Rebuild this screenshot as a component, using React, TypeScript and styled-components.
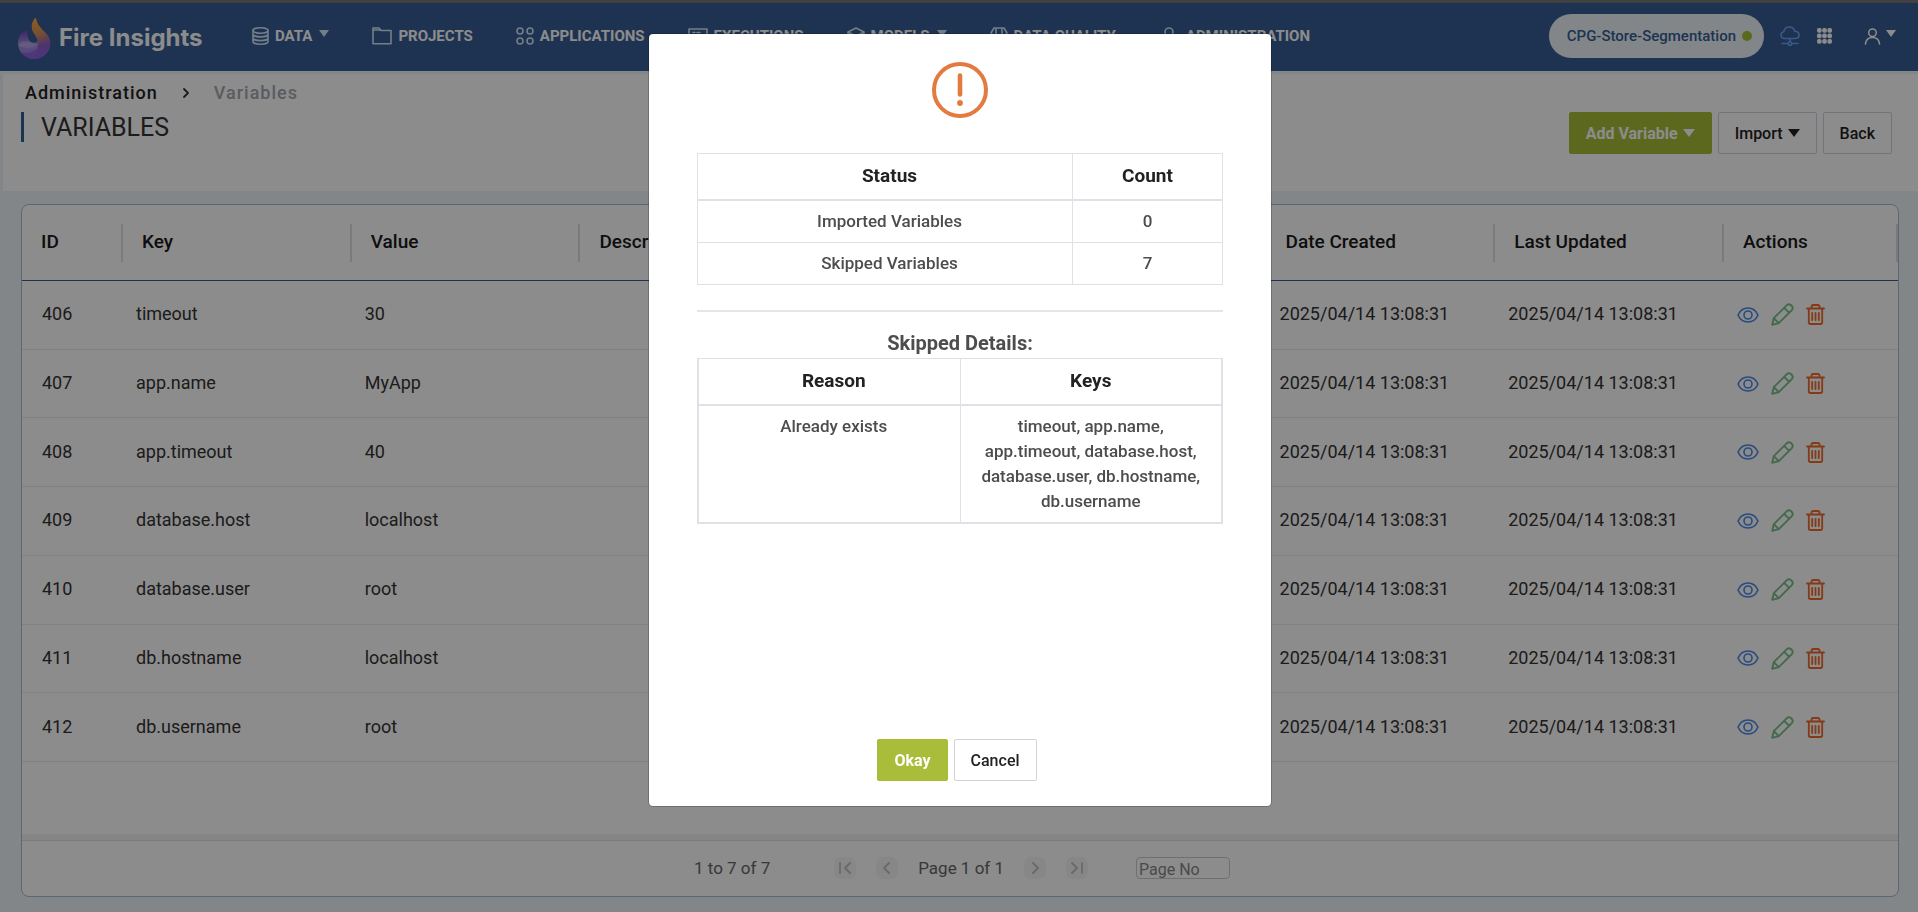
import React from 'react';
import styled, { createGlobalStyle, css } from 'styled-components';

const color = {
  brand: '#385d95',
  green: '#a9bd3a',
  page: '#eef4f8',
  tableLine: '#dee2e6',
};

const GlobalStyle = createGlobalStyle`
  *, *::before, *::after { box-sizing: border-box; }
  body {
    margin: 0;
    font-family: Roboto, "Liberation Sans", sans-serif;
    font-size: 16px;
    color: #333;
    background: ${color.page};
  }
  button, input { font-family: inherit; }
`;

/* ---------- page frame ---------- */

const Page = styled.div`
  display: flex;
  flex-direction: column;
  min-height: 100vh;
`;

const TopBar = styled.header`
  display: flex;
  align-items: center;
  height: 71px;
  padding: 0 22px 0 18px;
  border-top: 3px solid #777;
  background: ${color.brand};
`;

const Brand = styled.a`
  display: flex;
  align-items: center;
  gap: 8px;
  width: 234px;
  padding-top: 2px;
  color: #fff;
  font: 700 24px/32px Inter, sans-serif;
  text-decoration: none;
  white-space: nowrap;
`;

const Nav = styled.nav`
  display: flex;
  flex: 1;
  gap: 43px;
  padding-bottom: 2px;
`;

const NavLink = styled.a`
  display: flex;
  align-items: center;
  gap: 6px;
  color: #fff;
  font-size: 15px;
  font-weight: 700;
  line-height: 24px;
  text-decoration: none;
  white-space: nowrap;
  svg:first-child { color: #cfe6f7; }
`;

const Tools = styled.div`
  display: flex;
  align-items: center;
  padding-bottom: 2px;
`;

const ProjectPill = styled.button`
  display: flex;
  align-items: center;
  gap: 6px;
  height: 44px;
  margin-right: 16px;
  padding: 0 12px 0 18px;
  border: 0;
  border-radius: 22px;
  background: ${color.page};
  color: ${color.brand};
  font-size: 15px;
  font-weight: 500;
  white-space: nowrap;
`;

const StatusDot = styled.span`
  width: 10px;
  height: 10px;
  border-radius: 50%;
  background: ${color.green};
`;

const ToolButton = styled.button<{ $tone?: string; $gap: number }>`
  display: flex;
  align-items: center;
  gap: 4px;
  margin-right: ${(p) => p.$gap}px;
  padding: 0;
  border: 0;
  background: none;
  color: ${(p) => p.$tone ?? '#fff'};
`;

/* ---------- heading ---------- */

const Heading = styled.section`
  margin: 3px 0 0 3px;
  padding: 7px 26px 37px 18px;
  background: #fff;
`;

const Crumbs = styled.nav`
  display: flex;
  align-items: center;
  gap: 24px;
  padding-left: 4px;
  font-size: 18px;
  font-weight: 500;
  line-height: 24px;
  letter-spacing: 1px;
`;

const Crumb = styled.a`
  color: #222;
  text-decoration: none;
`;

const CurrentCrumb = styled.span`
  color: #a3a8b0;
`;

const HeadingRow = styled.div`
  display: flex;
  align-items: flex-start;
  justify-content: space-between;
  margin-top: 7px;
`;

const Title = styled.h1`
  margin: 0;
  padding: 2px 0 0 17px;
  border-left: 3px solid ${color.brand};
  color: #333;
  font-size: 25px;
  font-weight: 400;
  line-height: 28px;
`;

const ButtonGroup = styled.div`
  display: flex;
  gap: 6px;
`;

const Button = styled.button<{ $primary?: boolean }>`
  display: flex;
  align-items: center;
  gap: 5px;
  height: 42px;
  padding: 0 16px;
  border: 1px solid #ced4da;
  border-radius: 2px;
  background: #fff;
  color: #222;
  font-size: 16px;
  font-weight: 500;
  white-space: nowrap;
  ${(p) =>
    p.$primary &&
    css`
      border-color: ${color.green};
      background: ${color.green};
      color: #fff;
      font-weight: 700;
    `}
`;

/* ---------- variables grid ---------- */

const Card = styled.main`
  display: flex;
  flex: 1;
  flex-direction: column;
  margin: 13px 19px 15px 21px;
  border: 1px solid #a3bdd6;
  border-radius: 8px;
  background: #fff;
  overflow: hidden;
`;

const GridArea = styled.div`
  flex: 1;
`;

const Grid = styled.table`
  width: 100%;
  height: 557px;
  border-spacing: 0;
  table-layout: fixed;
  color: #333;
  font-size: 18px;
`;

const GridHead = styled.th`
  height: 76px;
  padding: 0;
  border-bottom: 1px solid ${color.brand};
  color: #1a1a1a;
  font-size: 19px;
  font-weight: 500;
  text-align: left;
`;

const HeadLabel = styled.div`
  height: 38px;
  padding-left: 19px;
  border-right: 2px solid #dcdfe3;
  line-height: 36px;
`;

const GridCell = styled.td`
  padding: 0 13px 2px;
  border-bottom: 1px solid #ebebeb;
  &:first-child { padding-left: 20px; }
`;

const RowActions = styled.div`
  display: flex;
  align-items: center;
  gap: 12px;
  padding-top: 2px;
`;

const IconButton = styled.button<{ $tone: string }>`
  display: flex;
  padding: 0;
  border: 0;
  background: none;
  color: ${(p) => p.$tone};
`;

const ScrollStrip = styled.div`
  height: 7px;
  border-bottom: 1px solid #e0e0e0;
  background: #f3f3f3;
`;

const Pager = styled.footer`
  display: flex;
  align-items: center;
  justify-content: center;
  gap: 20px;
  height: 55px;
  padding: 0 0 2px 4px;
  color: #666;
  font-size: 17px;
`;

const RowRange = styled.span`
  margin-right: 44px;
`;

const PagerButton = styled.button`
  display: flex;
  align-items: center;
  justify-content: center;
  width: 22px;
  height: 22px;
  padding: 0;
  border: 0;
  border-radius: 7px;
  background: #f6f6f6;
  color: #c0c0c0;
`;

const PageInput = styled.input`
  width: 94px;
  height: 22px;
  margin-left: 28px;
  padding: 3px 2px 0;
  border: 1px solid #ccc;
  border-radius: 4px;
  background: #fff;
  font-size: 16px;
  &::placeholder { color: #888; opacity: 1; }
`;

/* ---------- import result dialog ---------- */

const Backdrop = styled.div`
  position: fixed;
  inset: 0;
  display: flex;
  align-items: flex-start;
  justify-content: center;
  padding: 33px 0 0 2px;
  background: rgba(0, 0, 0, 0.45);
`;

const Dialog = styled.div`
  display: flex;
  flex-direction: column;
  align-items: center;
  width: 624px;
  min-height: calc(100vh - 138px);
  padding: 28px 48px 25px;
  border: 1px solid rgba(0, 0, 0, 0.2);
  border-radius: 5px;
  background: #fff;
  background-clip: padding-box;
  color: #4d4d4d;
`;

const ResultTable = styled.table<{ $framed?: boolean }>`
  width: 100%;
  border-collapse: collapse;
  table-layout: fixed;
  font-size: 17px;
  font-weight: 500;
  text-align: center;
  line-height: 25px;
  ${(p) =>
    p.$framed
      ? css`
          border: 2px solid ${color.tableLine};
          border-top-width: 1px;
        `
      : css`
          margin-top: 35px;
        `}
  th {
    padding: 10px 12px 11px;
    border: 1px solid ${color.tableLine};
    border-bottom-width: 2px;
    color: #222;
    font-size: 19px;
    font-weight: 700;
    line-height: 24px;
  }
  td {
    padding: 8px 12px;
    border: 1px solid ${color.tableLine};
    vertical-align: top;
  }
  th:first-child,
  td:first-child {
    padding-left: 21px;
  }
`;

const Divider = styled.hr`
  width: 100%;
  height: 2px;
  margin: 25px 0 0;
  border: 0;
  background: #e5e5e5;
`;

const DetailsTitle = styled.h2`
  margin: 0;
  padding: 19px 0 3px;
  font-size: 20px;
  font-weight: 700;
  line-height: 24px;
`;

const DialogActions = styled.div`
  display: flex;
  gap: 6px;
  margin-top: auto;
  padding-right: 6px;
`;

/* ---------- icons ---------- */

const strokeProps = {
  fill: 'none',
  stroke: 'currentColor',
  strokeWidth: 1.6,
  strokeLinecap: 'round' as const,
  strokeLinejoin: 'round' as const,
  'aria-hidden': true,
};

const FlameLogo = () => (
  <svg width="33" height="41" viewBox="0 0 33 41" aria-hidden>
    <defs>
      <linearGradient id="flame" x1="0.3" y1="0" x2="0.5" y2="1">
        <stop offset="0" stopColor="#f7ab3e" />
        <stop offset="0.4" stopColor="#d9925a" />
        <stop offset="0.7" stopColor="#8d5fc4" />
        <stop offset="1" stopColor="#9560f0" />
      </linearGradient>
      <linearGradient id="bowl" x1="0.5" y1="0" x2="0.6" y2="1">
        <stop offset="0" stopColor="#6a3fc4" />
        <stop offset="0.5" stopColor="#a994e0" />
        <stop offset="1" stopColor="#9a74ea" />
      </linearGradient>
    </defs>
    <path d="M10 11C3 14 0 19 0 25c0 9 7 15.500 15 16 5-4 8-11 7-18-3 4-9 3-11-1-2-3-2-7-1-11Z" fill="url(#bowl)" />
    <path d="M17 0c-4 5-4 10-2 14 3 5 6 8 5 14-1 5-3 9-8 12.500C22 43 32.500 36 32.500 25 32.500 15 20 12 18 0Z" fill="url(#flame)" />
    <path d="M0 27c4-5 8-4 13-3 3 1 6 0 8-3-1 6-5 9-10 9-4 0-8-1-11-3Z" fill="#d8cdf5" opacity="0.35" />
    <path d="M3 34c5 2 11 1 16-4-1 4-4 8-7 10.500C8 40 5 37 3 34Z" fill="#7d4bd8" opacity="0.5" />
  </svg>
);

const Caret = ({ w = 10, h = 8 }: { w?: number; h?: number }) => (
  <svg width={w} height={h} viewBox="0 0 10 8" preserveAspectRatio="none" aria-hidden>
    <path d="M0 0h10L5 8Z" fill="currentColor" />
  </svg>
);

const NavCaretBox = styled.span`
  display: flex;
  padding: 0 0 5px 1px;
`;

const NavCaret = () => (
  <NavCaretBox>
    <Caret h={7} />
  </NavCaretBox>
);

const DatabaseIcon = () => (
  <svg width="17" height="18" viewBox="0 0 17 18" {...strokeProps}>
    <ellipse cx="8.500" cy="3.500" rx="7.500" ry="2.700" />
    <path d="M1 3.500v11c0 1.500 3.300 2.700 7.500 2.700s7.500-1.200 7.500-2.700v-11M1 7.200c0 1.500 3.300 2.700 7.500 2.700S16 8.700 16 7.200M1 10.900c0 1.500 3.300 2.700 7.500 2.700s7.500-1.200 7.500-2.700" />
  </svg>
);

const FolderIcon = () => (
  <svg width="20" height="18" viewBox="0 0 20 18" {...strokeProps}>
    <path d="M1 16.800V1h6l2 2.500h10v13.300Z" />
    <path d="M1 3h7" />
  </svg>
);

const AppsIcon = () => (
  <svg width="18" height="18" viewBox="0 0 18 18" {...strokeProps}>
    <circle cx="4" cy="4" r="3" />
    <circle cx="14" cy="4" r="3" />
    <circle cx="4" cy="14" r="3" />
    <circle cx="14" cy="14" r="3" />
  </svg>
);

const WindowIcon = () => (
  <svg width="20" height="16" viewBox="0 0 20 16" {...strokeProps}>
    <path d="M1 1h18v14H1ZM5 4.500h2M9 4.500h3" />
  </svg>
);

const CubeIcon = () => (
  <svg width="18" height="18" viewBox="0 0 18 18" {...strokeProps}>
    <path d="M9 1l8 4v8l-8 4-8-4V5ZM1 5l8 4 8-4M9 9v8" />
  </svg>
);

const QualityIcon = () => (
  <svg width="18" height="18" viewBox="0 0 18 18" {...strokeProps}>
    <path d="M4 1h10l3 5-8 11L1 6ZM6 1v6l3 9 3-9V1" />
  </svg>
);

const PersonIcon = ({ size = 18 }: { size?: number }) => (
  <svg width={size} height={size} viewBox="0 0 18 18" {...strokeProps}>
    <circle cx="9" cy="5" r="4" />
    <path d="M1.500 17c.5-4.500 3.500-7 7.500-7s7 2.500 7.500 7" />
  </svg>
);

const AdminIcon = () => (
  <svg width="21" height="18" viewBox="-1 0 21 18" {...strokeProps}>
    <circle cx="9" cy="5" r="4" />
    <path d="M1.500 17c.5-4.500 3.500-7 7.500-7s7 2.500 7.500 7" />
  </svg>
);

const CloudIcon = () => (
  <svg width="20" height="20" viewBox="0 0 20 20" {...strokeProps}>
    <path d="M5 12.500C2.500 12.500 1 11 1 9c0-1.800 1.200-3 2.800-3.300C4.300 3 6.500 1 9.300 1c2.700 0 4.900 1.700 5.500 4.200C17.300 5.300 19 6.900 19 9c0 2-1.600 3.500-4 3.500ZM10 12.500v3M2 17.500h6M12 17.500h6" />
    <circle cx="10" cy="17.500" r="1.800" />
  </svg>
);

const DotsIcon = () => (
  <svg width="15" height="16" viewBox="0 0 15 16" fill="currentColor" aria-hidden>
    {[0, 5.5, 11].map((y) =>
      [0, 5.2, 10.4].map((x) => <rect key={`${x}-${y}`} x={x} y={y} width="4.600" height="4.800" rx="1.800" />),
    )}
  </svg>
);

const EyeIcon = () => (
  <svg width="22" height="18" viewBox="0 0 22 18" {...strokeProps}>
    <path d="M1 9c2-4.500 5.600-7 10-7s8 2.500 10 7c-2 4.500-5.600 7-10 7s-8-2.500-10-7Z" />
    <circle cx="11" cy="9" r="4" />
  </svg>
);

const PencilIcon = () => (
  <svg width="23" height="23" viewBox="0 0 23 23" {...strokeProps} strokeWidth={1.900}>
    <path d="M1.200 21.800l1.600-6.600L15.600 2.400c1-1 2.300-1.500 3.600-.8.900.5 1.700 1.300 2.200 2.200.7 1.300.2 2.600-.8 3.600L7.800 20.200ZM2.800 15.200l5 5M13.200 4.800l5 5" />
  </svg>
);

const TrashIcon = () => (
  <svg width="19" height="21" viewBox="0 0 19 21" {...strokeProps} strokeWidth={1.800}>
    <path d="M1 4.500h17M5.500 4.300V2.800c0-1 .7-1.800 1.700-1.800h4.600c1 0 1.700.8 1.700 1.800v1.500M2.800 4.500v13.700c0 1 .7 1.800 1.700 1.800h10c1 0 1.700-.8 1.700-1.800V4.500M6.200 9v7M9.500 9v7M12.800 9v7" />
  </svg>
);

const Chevron = ({ d, w = 12 }: { d: string; w?: number }) => (
  <svg width={w} height="12" viewBox={`0 0 ${w} 12`} {...strokeProps} strokeWidth={1.800}>
    <path d={d} />
  </svg>
);

const WarningIcon = () => (
  <svg width="56" height="56" viewBox="0 0 56 56" fill="none" stroke="#e37b40" aria-hidden>
    <circle cx="28" cy="28" r="26" strokeWidth="4" />
    <path d="M28 13.500v19" strokeWidth="4.600" strokeLinecap="round" />
    <circle cx="28" cy="41" r="2.900" fill="#e37b40" stroke="none" />
  </svg>
);

/* ---------- data ---------- */

const navItems = [
  { label: 'DATA', Icon: DatabaseIcon, menu: true },
  { label: 'PROJECTS', Icon: FolderIcon },
  { label: 'APPLICATIONS', Icon: AppsIcon },
  { label: 'EXECUTIONS', Icon: WindowIcon },
  { label: 'MODELS', Icon: CubeIcon, menu: true },
  { label: 'DATA QUALITY', Icon: QualityIcon },
  { label: 'ADMINISTRATION', Icon: AdminIcon },
];

const headings = ['ID', 'Key', 'Value', 'Description', '', '', 'Date Created', 'Last Updated', 'Actions'];

const timestamp = '2025/04/14 13:08:31';

const variables = [
  { id: 406, key: 'timeout', value: '30' },
  { id: 407, key: 'app.name', value: 'MyApp' },
  { id: 408, key: 'app.timeout', value: '40' },
  { id: 409, key: 'database.host', value: 'localhost' },
  { id: 410, key: 'database.user', value: 'root' },
  { id: 411, key: 'db.hostname', value: 'localhost' },
  { id: 412, key: 'db.username', value: 'root' },
];

/* ---------- sections ---------- */

const AppHeader = () => (
  <TopBar>
    <Brand href="#">
      <FlameLogo />
      Fire Insights
    </Brand>
    <Nav>
      {navItems.map(({ label, Icon, menu }) => (
        <NavLink href="#" key={label}>
          <Icon />
          {label}
          {menu && <NavCaret />}
        </NavLink>
      ))}
    </Nav>
    <Tools>
      <ProjectPill>
        CPG-Store-Segmentation
        <StatusDot />
      </ProjectPill>
      <ToolButton $tone="#6aa5f5" $gap={17} aria-label="Cloud">
        <CloudIcon />
      </ToolButton>
      <ToolButton $gap={32} aria-label="Apps">
        <DotsIcon />
      </ToolButton>
      <ToolButton $gap={0} aria-label="Account">
        <PersonIcon size={17} />
        <NavCaret />
      </ToolButton>
    </Tools>
  </TopBar>
);

const PageHeading = () => (
  <Heading>
    <Crumbs>
      <Crumb href="#">Administration</Crumb>
      <Chevron w={8} d="M2 2l4 4-4 4" />
      <CurrentCrumb>Variables</CurrentCrumb>
    </Crumbs>
    <HeadingRow>
      <Title>VARIABLES</Title>
      <ButtonGroup>
        <Button $primary>
          Add Variable <Caret w={12} />
        </Button>
        <Button>
          Import <Caret w={12} />
        </Button>
        <Button>Back</Button>
      </ButtonGroup>
    </HeadingRow>
  </Heading>
);

const VariablesGrid = () => (
  <Grid>
    <colgroup>
      <col width="101" />
      <col span={7} />
      <col width="174" />
    </colgroup>
    <thead>
      <tr>
        {headings.map((label, i) => (
          <GridHead key={i}>
            <HeadLabel>{label}</HeadLabel>
          </GridHead>
        ))}
      </tr>
    </thead>
    <tbody>
      {variables.map((v) => (
        <tr key={v.id}>
          <GridCell>{v.id}</GridCell>
          <GridCell>{v.key}</GridCell>
          <GridCell>{v.value}</GridCell>
          <GridCell />
          <GridCell />
          <GridCell />
          <GridCell>{timestamp}</GridCell>
          <GridCell>{timestamp}</GridCell>
          <GridCell>
            <RowActions>
              <IconButton $tone="#4a8ae6" aria-label="View">
                <EyeIcon />
              </IconButton>
              <IconButton $tone="#7ac08a" aria-label="Edit">
                <PencilIcon />
              </IconButton>
              <IconButton $tone="#f0692a" aria-label="Delete">
                <TrashIcon />
              </IconButton>
            </RowActions>
          </GridCell>
        </tr>
      ))}
    </tbody>
  </Grid>
);

const GridPager = () => (
  <Pager>
    <RowRange>1 to 7 of 7</RowRange>
    <PagerButton aria-label="First page">
      <Chevron w={14} d="M2 1v10M12 1L7 6l5 5" />
    </PagerButton>
    <PagerButton aria-label="Previous page">
      <Chevron d="M8 1L3 6l5 5" />
    </PagerButton>
    <span>Page 1 of 1</span>
    <PagerButton aria-label="Next page">
      <Chevron d="M4 1l5 5-5 5" />
    </PagerButton>
    <PagerButton aria-label="Last page">
      <Chevron w={14} d="M2 1l5 5-5 5M12 1v10" />
    </PagerButton>
    <PageInput placeholder="Page No" aria-label="Page No" />
  </Pager>
);

const ImportResult = () => (
  <Backdrop>
    <Dialog role="dialog" aria-modal="true">
      <WarningIcon />
      <ResultTable>
        <colgroup>
          <col />
          <col width="150" />
        </colgroup>
        <thead>
          <tr>
            <th>Status</th>
            <th>Count</th>
          </tr>
        </thead>
        <tbody>
          <tr>
            <td>Imported Variables</td>
            <td>0</td>
          </tr>
          <tr>
            <td>Skipped Variables</td>
            <td>7</td>
          </tr>
        </tbody>
      </ResultTable>
      <Divider />
      <DetailsTitle>Skipped Details:</DetailsTitle>
      <ResultTable $framed>
        <thead>
          <tr>
            <th>Reason</th>
            <th>Keys</th>
          </tr>
        </thead>
        <tbody>
          <tr>
            <td>Already exists</td>
            <td>timeout, app.name, app.timeout, database.host, database.user, db.hostname, db.username</td>
          </tr>
        </tbody>
      </ResultTable>
      <DialogActions>
        <Button $primary>Okay</Button>
        <Button>Cancel</Button>
      </DialogActions>
    </Dialog>
  </Backdrop>
);

export default function App() {
  return (
    <>
      <GlobalStyle />
      <Page>
        <AppHeader />
        <PageHeading />
        <Card>
          <GridArea>
            <VariablesGrid />
          </GridArea>
          <ScrollStrip />
          <GridPager />
        </Card>
      </Page>
      <ImportResult />
    </>
  );
}
